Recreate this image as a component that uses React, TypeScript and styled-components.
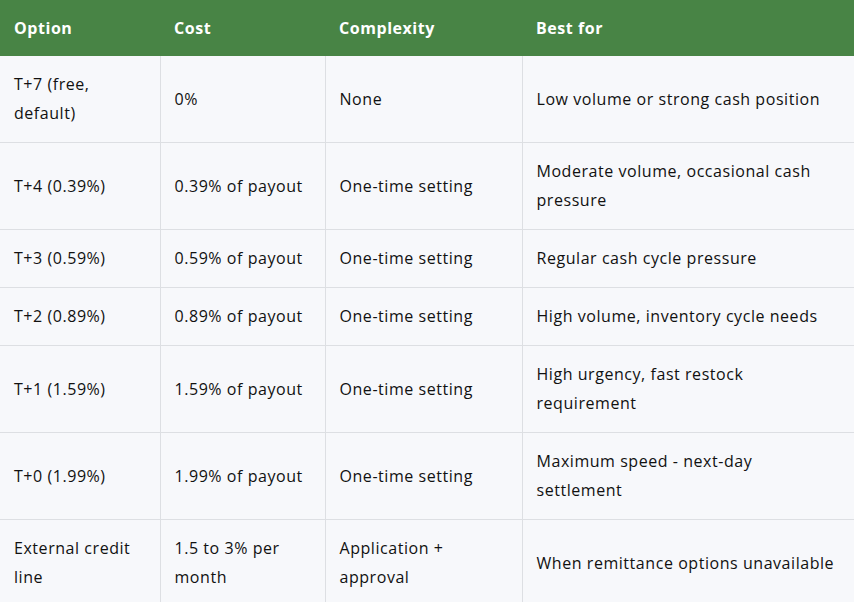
import React from "react";
import styled, { createGlobalStyle } from "styled-components";

const Global = createGlobalStyle`
  body { margin: 0; background: #fff; font-family: "Open Sans", "Noto Sans", sans-serif; }
`;

const Table = styled.table`
  width: 854px;
  border-collapse: collapse;
  table-layout: fixed;
  font-size: 16px;
  letter-spacing: 0.55px;
  color: #111;
`;

const Th = styled.th<{ w: number }>`
  width: ${(p) => p.w}px;
  background: #488445;
  color: #fff;
  font-weight: 700;
  text-align: left;
  height: 56px;
  padding: 0 14px;
  box-sizing: border-box;
  line-height: 29px;
`;

const Td = styled.td`
  background: #f7f8fb;
  border: 1px solid #dddfe3;
  border-top: none;
  padding: 14px 14px 14px 14px;
  line-height: 29px;
  vertical-align: middle;
  &:first-child { border-left: none; }
  &:last-child { border-right: none; }
`;

const rows = [
  ["T+7 (free, default)", "0%", "None", "Low volume or strong cash position"],
  ["T+4 (0.39%)", "0.39% of payout", "One-time setting", "Moderate volume, occasional cash pressure"],
  ["T+3 (0.59%)", "0.59% of payout", "One-time setting", "Regular cash cycle pressure"],
  ["T+2 (0.89%)", "0.89% of payout", "One-time setting", "High volume, inventory cycle needs"],
  ["T+1 (1.59%)", "1.59% of payout", "One-time setting", "High urgency, fast restock requirement"],
  ["T+0 (1.99%)", "1.99% of payout", "One-time setting", "Maximum speed - next-day settlement"],
  ["External credit line", "1.5 to 3% per month", "Application + approval", "When remittance options unavailable"],
];

export default function App() {
  return (
    <>
      <Global />
      <Table>
        <thead>
          <tr>
            <Th w={160}>Option</Th>
            <Th w={165}>Cost</Th>
            <Th w={197}>Complexity</Th>
            <Th w={332}>Best for</Th>
          </tr>
        </thead>
        <tbody>
          {rows.map((r, i) => (
            <tr key={i}>
              {r.map((c, j) => (
                <Td key={j}>{c}</Td>
              ))}
            </tr>
          ))}
        </tbody>
      </Table>
    </>
  );
}
